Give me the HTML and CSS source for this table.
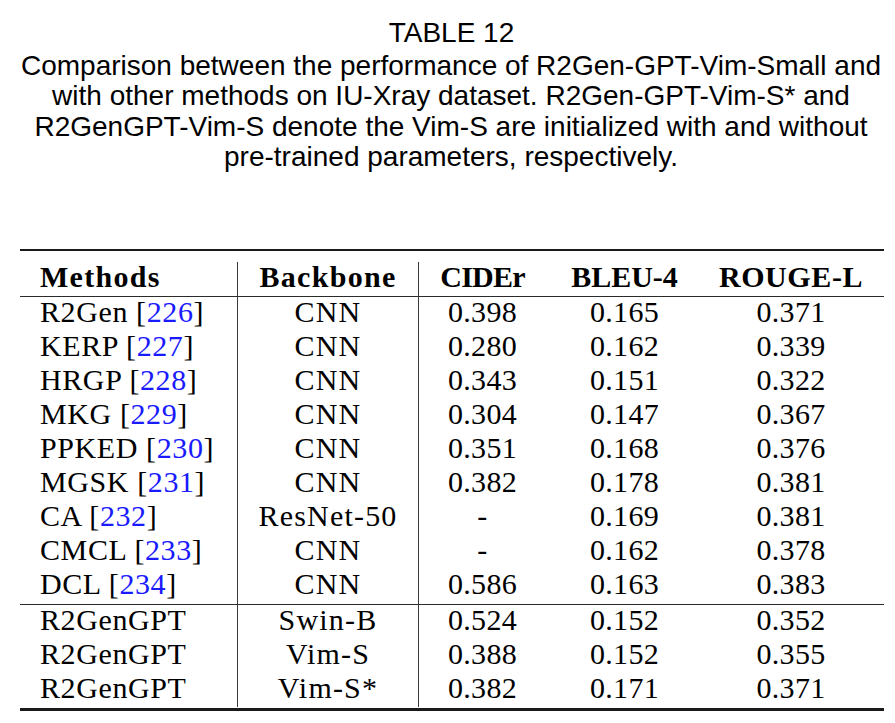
FILE: index.html
```html
<!DOCTYPE html>
<html lang="en">
<head>
<meta charset="utf-8">
<title>Table 12</title>
<link rel="stylesheet" href="styles.css">
</head>
<body>
<div class="page">
  <div class="caption-title">TABLE 12</div>
  <div class="caption">Comparison between the performance of R2Gen-GPT-Vim-Small and<br>with other methods on IU-Xray dataset. R2Gen-GPT-Vim-S* and<br>R2GenGPT-Vim-S denote the Vim-S are initialized with and without<br>pre-trained parameters, respectively.</div>

  <div class="table-wrap">
    <div class="rule-top"></div>
    <table class="results">
      <colgroup>
        <col class="c1"><col class="c2"><col class="c3"><col class="c4"><col class="c5">
      </colgroup>
      <thead>
        <tr>
          <th class="left wide">Methods</th>
          <th class="vl wide">Backbone</th>
          <th class="vl tight">CIDEr</th>
          <th>BLEU-4</th>
          <th class="last semi">ROUGE-L</th>
        </tr>
      </thead>
      <tbody>
        <tr><td class="left">R2Gen [<span class="ref">226</span>]</td><td class="vl txt">CNN</td><td class="vl">0.398</td><td>0.165</td><td class="last">0.371</td></tr>
        <tr><td class="left">KERP [<span class="ref">227</span>]</td><td class="vl txt">CNN</td><td class="vl">0.280</td><td>0.162</td><td class="last">0.339</td></tr>
        <tr><td class="left">HRGP [<span class="ref">228</span>]</td><td class="vl txt">CNN</td><td class="vl">0.343</td><td>0.151</td><td class="last">0.322</td></tr>
        <tr><td class="left">MKG [<span class="ref">229</span>]</td><td class="vl txt">CNN</td><td class="vl">0.304</td><td>0.147</td><td class="last">0.367</td></tr>
        <tr><td class="left">PPKED [<span class="ref">230</span>]</td><td class="vl txt">CNN</td><td class="vl">0.351</td><td>0.168</td><td class="last">0.376</td></tr>
        <tr><td class="left">MGSK [<span class="ref">231</span>]</td><td class="vl txt">CNN</td><td class="vl">0.382</td><td>0.178</td><td class="last">0.381</td></tr>
        <tr><td class="left">CA [<span class="ref">232</span>]</td><td class="vl txt">ResNet-50</td><td class="vl">-</td><td>0.169</td><td class="last">0.381</td></tr>
        <tr><td class="left">CMCL [<span class="ref">233</span>]</td><td class="vl txt">CNN</td><td class="vl">-</td><td>0.162</td><td class="last">0.378</td></tr>
        <tr class="mid"><td class="left">DCL [<span class="ref">234</span>]</td><td class="vl txt">CNN</td><td class="vl">0.586</td><td>0.163</td><td class="last">0.383</td></tr>
        <tr><td class="left">R2GenGPT</td><td class="vl txt">Swin-B</td><td class="vl">0.524</td><td>0.152</td><td class="last">0.352</td></tr>
        <tr><td class="left">R2GenGPT</td><td class="vl txt">Vim-S</td><td class="vl">0.388</td><td>0.152</td><td class="last">0.355</td></tr>
        <tr><td class="left">R2GenGPT</td><td class="vl txt">Vim-S*</td><td class="vl">0.382</td><td>0.171</td><td class="last">0.371</td></tr>
      </tbody>
    </table>
    <div class="rule-bottom"></div>
  </div>
</div>
</body>
</html>
```

FILE: styles.css
```css
html, body {
  margin: 0;
  padding: 0;
  background: #ffffff;
  color: #000000;
}

.page {
  width: 895px;
  height: 723px;
  overflow: hidden;
}

.caption-title {
  font-family: "Liberation Sans", Arial, sans-serif;
  font-size: 28px;
  line-height: 30px;
  text-align: center;
  padding-top: 18px;
  padding-left: 8px;
}

.caption {
  font-family: "Liberation Sans", Arial, sans-serif;
  font-size: 28px;
  line-height: 30.3px;
  text-align: center;
  white-space: nowrap;
  margin-top: 3px;
  padding-left: 7px;
}

.table-wrap {
  margin: 77px 0 0 20px;
  width: 864px;
}

.rule-top {
  height: 2px;
  background: #1a1a1a;
  margin-bottom: 11px;
}

.rule-bottom {
  height: 3px;
  background: #1a1a1a;
  margin-top: 1px;
}

.results {
  border-collapse: separate;
  border-spacing: 0;
  table-layout: fixed;
  width: 864px;
  font-family: "Liberation Serif", "Times New Roman", serif;
  font-size: 30px;
}

.c1 { width: 217px; }
.c2 { width: 181px; }
.c3 { width: 128px; }
.c4 { width: 157px; }
.c5 { width: 181px; }

.results th,
.results td {
  line-height: 30px;
  padding: 0 0 4px 0;
  text-align: center;
  white-space: nowrap;
  color: #000;
  letter-spacing: 0.3px;
}

.results th {
  font-weight: bold;
  border-bottom: 1px solid #2a2a2a;
  letter-spacing: 0;
}

.results th.wide {
  letter-spacing: 1.3px;
}

.results th.semi {
  letter-spacing: 0.6px;
}

.results th.tight {
  letter-spacing: -0.8px;
}

.results .left {
  text-align: left;
  padding-left: 20px;
}

.results td.left {
  letter-spacing: 0.6px;
}

.results td.txt {
  letter-spacing: 1.2px;
}

.results .vl {
  border-left: 1px solid #3a3a3a;
}

.results .last {
  padding-right: 5px;
}

.results tr.mid td {
  padding-bottom: 5px;
  border-bottom: 1px solid #2a2a2a;
}

.ref {
  color: #1a1aff;
}
```
